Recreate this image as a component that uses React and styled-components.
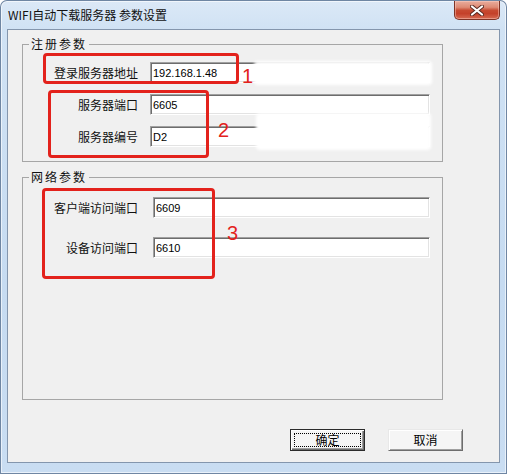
import React from 'react';
import styled, { createGlobalStyle } from 'styled-components';

const GlobalStyle = createGlobalStyle`
  html, body {
    margin: 0;
    padding: 0;
    background: #ffffff;
  }

  body {
    font-family: "Noto Sans CJK SC", "Liberation Sans", sans-serif;
  }
`;

const Window = styled.div`
  position: relative;
  width: 507px;
  height: 474px;
  box-sizing: border-box;
  display: flex;
  flex-direction: column;
  padding: 0 7px 11px;
  background: linear-gradient(180deg, #dce9f7 0px, #d0e2f4 29px, #c6dbf1 60%, #c9ddf2 100%);
  border-radius: 7px 7px 0 0;
  box-shadow: inset 0 0 0 1px #6f86a3, inset 0 0 0 2px rgba(255, 255, 255, 0.6);
  overflow: hidden;
`;

const TitleBar = styled.div`
  height: 29px;
  display: flex;
  justify-content: space-between;
  align-items: flex-start;
  padding-left: 1px;
`;

const Title = styled.div`
  font-size: 12px;
  line-height: 29px;
  color: #111;
  white-space: nowrap;
`;

const CloseButton = styled.div`
  width: 46px;
  height: 19px;
  margin-top: 1px;
  box-sizing: border-box;
  display: flex;
  align-items: center;
  justify-content: center;
  border: 1px solid #7e3326;
  border-top: none;
  border-radius: 0 0 5px 5px;
  background: linear-gradient(180deg, #e9ad9d 0%, #de8a74 35%, #c74a31 52%, #c4412a 70%, #d66a52 100%);
  box-shadow: inset 0 0 0 1px rgba(255, 210, 200, 0.45);
`;

const Client = styled.div`
  flex: 1;
  display: flex;
  flex-direction: column;
  background: #f0f0f0;
  border: 1px solid #8496ad;
  padding: 7px 0 0 14px;
`;

const Group = styled.fieldset`
  margin: 0 0 ${(p) => p.$after}px;
  padding: 0;
  width: 421px;
  height: ${(p) => p.$height}px;
  box-sizing: border-box;
  border: 1px solid #a6a6a6;
  min-inline-size: auto;
`;

const Caption = styled.legend`
  margin-left: 6px;
  padding: 0 2px;
  font-size: 12px;
  line-height: 14px;
  letter-spacing: 2px;
  color: #111;
`;

const Rows = styled.div`
  display: grid;
  grid-template-columns: 115px ${(p) => p.$inputWidth}px;
  column-gap: ${(p) => p.$gap}px;
  row-gap: ${(p) => p.$rowGap}px;
  padding-top: ${(p) => p.$top}px;
  align-items: center;
`;

const Label = styled.label`
  font-size: 12px;
  line-height: 14px;
  text-align: right;
  white-space: nowrap;
  color: #111;
`;

const Field = styled.input`
  width: 100%;
  height: 21px;
  box-sizing: border-box;
  margin: 0;
  padding: 1px 2px 0;
  border: 1px solid;
  border-color: #a0a0a0 #ffffff #ffffff #a0a0a0;
  box-shadow: inset 1px 1px 0 #6d6d6d, inset -1px -1px 0 #e3e3e3;
  background: #ffffff;
  font-family: "Liberation Sans", Arial, sans-serif;
  font-size: 11px;
  line-height: 13px;
  color: #000;
  outline: none;
`;

const ButtonRow = styled.div`
  margin-top: auto;
  margin-bottom: 11px;
  padding-right: 36px;
  display: flex;
  justify-content: flex-end;
  gap: 23px;
`;

const Button = styled.button`
  width: 75px;
  height: 22px;
  box-sizing: border-box;
  margin: 0;
  padding: 3px;
  display: flex;
  background: #f5f5f5;
  font-family: "Noto Sans CJK SC", sans-serif;
  font-size: 12px;
  color: #000;
  border: 1px solid;
  border-color: ${(p) => (p.$default ? '#2b2b2b' : '#e8e8e8 #6d6d6d #6d6d6d #e8e8e8')};
  box-shadow: ${(p) =>
    p.$default
      ? 'inset 1px 1px 0 #ffffff, inset -1px -1px 0 #6d6d6d, inset -2px -2px 0 #a0a0a0'
      : 'inset 1px 1px 0 #ffffff, inset -1px -1px 0 #a0a0a0'};
`;

const ButtonFace = styled.span`
  flex: 1;
  display: flex;
  align-items: center;
  justify-content: center;
  border: 1px dotted ${(p) => (p.$focus ? '#000' : 'transparent')};
  line-height: 12px;
`;

const Mark = styled.div`
  position: absolute;
  left: ${(p) => p.$x}px;
  top: ${(p) => p.$y}px;
  width: ${(p) => p.$w}px;
  height: ${(p) => p.$h}px;
  box-sizing: border-box;
  border: 3px solid #e3221c;
  border-radius: 4px;
  pointer-events: none;
`;

const MarkNumber = styled.div`
  position: absolute;
  left: ${(p) => p.$x}px;
  top: ${(p) => p.$y}px;
  font-family: "Liberation Sans", Arial, sans-serif;
  font-size: 20px;
  line-height: 20px;
  color: #e3221c;
`;

const Smudge = styled.div`
  position: absolute;
  left: ${(p) => p.$x}px;
  top: ${(p) => p.$y}px;
  width: ${(p) => p.$w}px;
  height: ${(p) => p.$h}px;
  background: #ffffff;
  filter: blur(1.5px);
  border-radius: 4px;
`;

const registerRows = [
  ['登录服务器地址', '192.168.1.48'],
  ['服务器端口', '6605'],
  ['服务器编号', 'D2'],
];

const networkRows = [
  ['客户端访问端口', '6609'],
  ['设备访问端口', '6610'],
];

function FieldRows({ rows, ...layout }) {
  return (
    <Rows {...layout}>
      {rows.map(([label, value]) => (
        <React.Fragment key={label}>
          <Label>{label}</Label>
          <Field value={value} readOnly />
        </React.Fragment>
      ))}
    </Rows>
  );
}

export default function App() {
  return (
    <>
      <GlobalStyle />
      <Window>
        <TitleBar>
          <Title>WIFI自动下载服务器 参数设置</Title>
          <CloseButton>
            <svg width="14" height="11" viewBox="0 0 14 11">
              <path d="M2 1.5 L12 9.5 M12 1.5 L2 9.5" stroke="#5a2a22" strokeWidth="4" strokeLinecap="round" />
              <path d="M2 1.5 L12 9.5 M12 1.5 L2 9.5" stroke="#ffffff" strokeWidth="2.2" strokeLinecap="round" />
            </svg>
          </CloseButton>
        </TitleBar>

        <Client>
          <Group $height={125} $after={8}>
            <Caption>注册参数</Caption>
            <FieldRows rows={registerRows} $inputWidth={280} $gap={12} $rowGap={11} $top={11} />
          </Group>

          <Group $height={230} $after={0}>
            <Caption>网络参数</Caption>
            <FieldRows rows={networkRows} $inputWidth={277} $gap={15} $rowGap={19} $top={13} />
          </Group>

          <ButtonRow>
            <Button $default>
              <ButtonFace $focus>确定</ButtonFace>
            </Button>
            <Button>
              <ButtonFace>取消</ButtonFace>
            </Button>
          </ButtonRow>
        </Client>

        <Smudge $x={254} $y={61} $w={178} $h={24} />
        <Smudge $x={256} $y={113} $w={175} $h={37} />

        <Mark $x={43} $y={53} $w={196} $h={31} />
        <Mark $x={48} $y={90} $w={161} $h={68} />
        <Mark $x={42} $y={188} $w={173} $h={91} />

        <MarkNumber $x={242} $y={66}>1</MarkNumber>
        <MarkNumber $x={218} $y={120}>2</MarkNumber>
        <MarkNumber $x={227} $y={223}>3</MarkNumber>
      </Window>
    </>
  );
}
